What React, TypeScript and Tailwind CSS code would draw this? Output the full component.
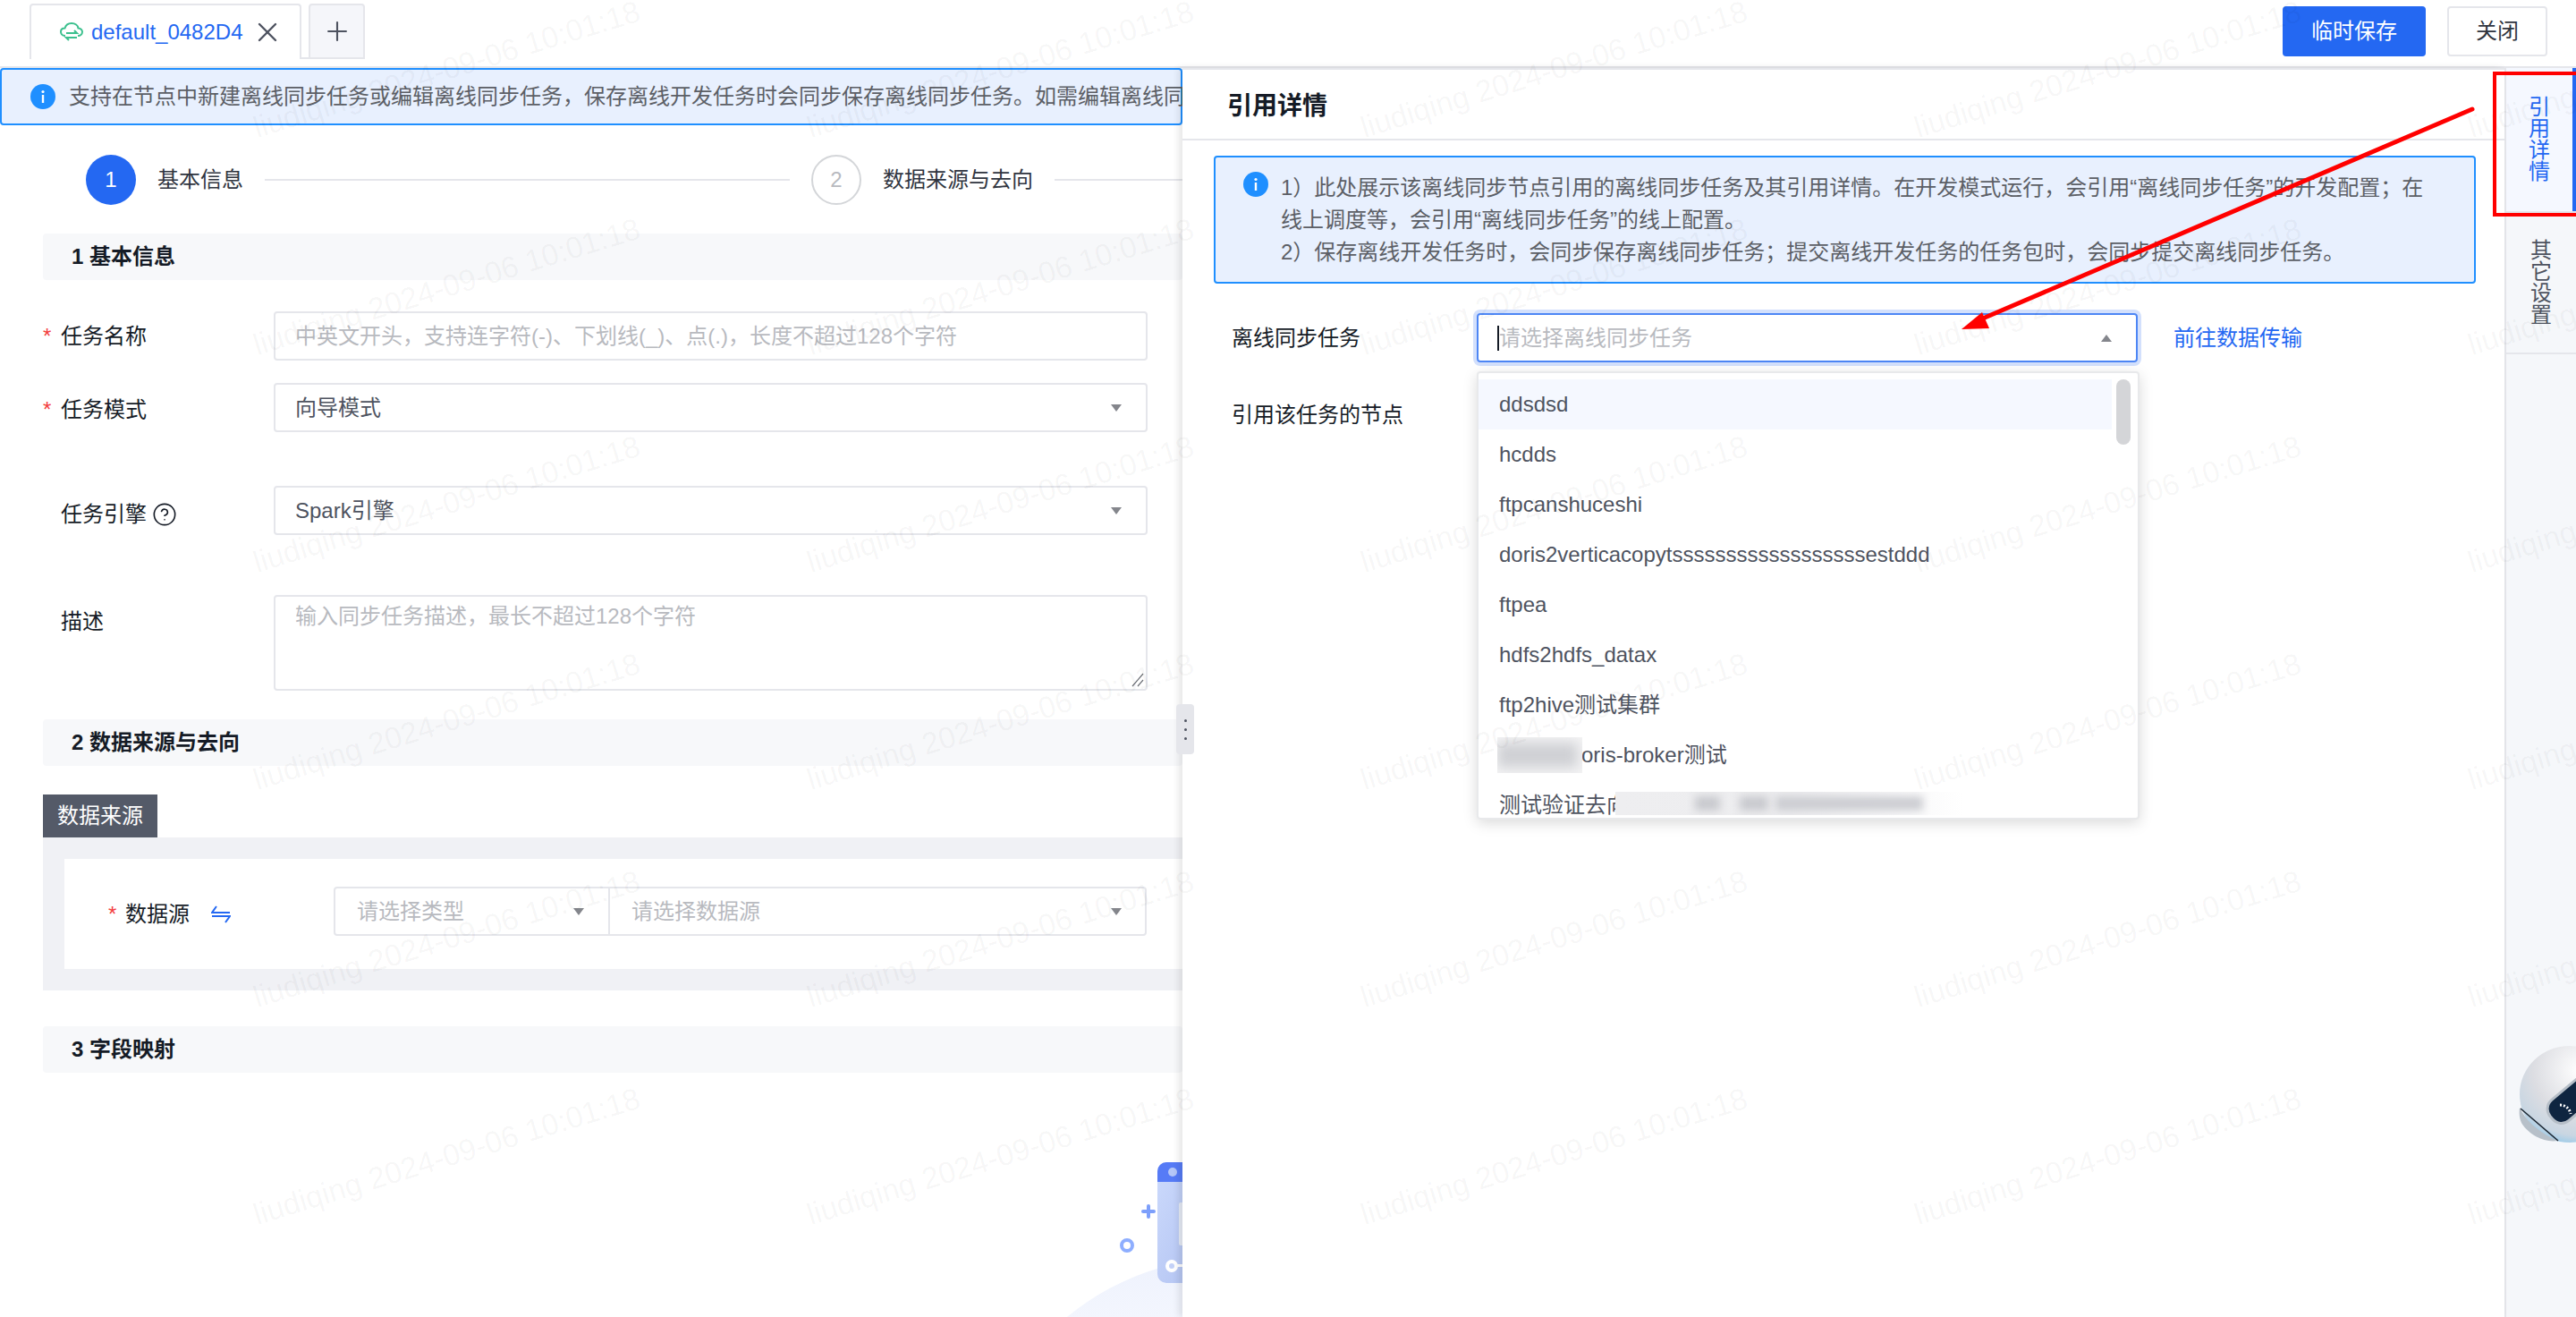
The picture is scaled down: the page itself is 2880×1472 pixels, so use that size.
import { CircleHelp, Plus, X } from 'lucide-react';

const options = ['ddsdsd', 'hcdds', 'ftpcanshuceshi', 'doris2verticacopytssssssssssssssssssestddd', 'ftpea', 'hdfs2hdfs_datax', 'ftp2hive测试集群'];

function ArrowDown() {
    return (
        <svg width="12" height="8" viewBox="0 0 12 8" className="shrink-0">
            <polygon points="0,0 12,0 6,8" fill="#84868c" />
        </svg>
    );
}

function InfoIcon() {
    return (
        <svg width="28" height="28" viewBox="0 0 28 28" className="shrink-0">
            <circle cx="14" cy="14" r="14" fill="#1f8fff" />
            <circle cx="14" cy="8.5" r="1.6" fill="#fff" />
            <rect x="12.8" y="12" width="2.4" height="9" fill="#fff" />
        </svg>
    );
}

function SectionTitle({ children }: { children: string }) {
    return (
        <div className="h-[52px] ml-12 pl-8 flex items-center bg-[#f7f8fa] rounded text-[#151b26] font-semibold whitespace-nowrap">
            {children}
        </div>
    );
}

function Step({ num, label, active }: { num: number; label: string; active?: boolean }) {
    return (
        <div className="flex items-center gap-6 shrink-0">
            <div className={active ? 'w-14 h-14 rounded-full bg-[#2468f2] text-white flex items-center justify-center' : 'w-14 h-14 rounded-full border-2 border-[#d4d6d9] text-[#b8babf] flex items-center justify-center'}>
                {num}
            </div>
            <span className="text-[#303540]">{label}</span>
        </div>
    );
}

function Label({ text, required, className }: { text: string; required?: boolean; className?: string }) {
    return (
        <div className={`w-[258px] ml-12 flex items-center shrink-0 text-[#151b26] ${className ?? ''}`}>
            <span className="w-5 text-[#f33e3e]">{required ? '*' : ''}</span>
            {text}
        </div>
    );
}

function Illustration() {
    return (
        <svg width="142" height="182" viewBox="0 0 142 182" className="absolute left-[1180px] top-[1214px]">
            <defs>
                <linearGradient id="hill" x1="0" y1="0" x2="0" y2="1">
                    <stop offset="0" stopColor="#eef2fd" />
                    <stop offset="0.3" stopColor="#fbfcff" />
                </linearGradient>
                <linearGradient id="body" x1="0" y1="0" x2="1" y2="1">
                    <stop offset="0" stopColor="#ccdafc" />
                    <stop offset="1" stopColor="#aebff0" />
                </linearGradient>
                <clipPath id="card">
                    <rect x="114" y="9" width="60" height="135" rx="10" />
                </clipPath>
            </defs>
            <circle cx="200" cy="410" r="295" fill="url(#hill)" />
            <g clipPath="url(#card)">
                <rect x="114" y="9" width="60" height="135" fill="url(#body)" />
                <rect x="114" y="9" width="60" height="22" fill="#567bf6" />
                <circle cx="131" cy="20" r="5" fill="#b5c7f7" />
                <rect x="138" y="54" width="10" height="48" rx="2" fill="#e6ebf6" />
                <circle cx="130" cy="125" r="5" fill="#c3d1f7" stroke="#fff" strokeWidth="4" />
                <rect x="135" y="123" width="10" height="3" fill="#fff" />
            </g>
            <rect x="96" y="62" width="16" height="4" rx="2" fill="#7d9ffb" />
            <rect x="102" y="56" width="4" height="16" rx="2" fill="#7d9ffb" />
            <circle cx="80" cy="102" r="6" fill="none" stroke="#8eaeff" strokeWidth="4" />
        </svg>
    );
}

function Robot() {
    return (
        <svg width="70" height="115" viewBox="0 0 70 115" className="absolute right-0 top-[1165px]">
            <defs>
                <radialGradient id="shell" cx="0.6" cy="0.25" r="0.85">
                    <stop offset="0" stopColor="#ffffff" />
                    <stop offset="0.55" stopColor="#dcdde2" />
                    <stop offset="0.8" stopColor="#c9d6e2" />
                    <stop offset="1" stopColor="#7cc4ee" />
                </radialGradient>
            </defs>
            <ellipse cx="63" cy="58" rx="56" ry="54" fill="url(#shell)" />
            <path d="M7 73 C14 88 30 102 50 110 C34 113 16 102 9 90 C7 85 6 80 7 73 Z" fill="#b7c0c9" />
            <path d="M8 74 L50 110" stroke="#1a2430" strokeWidth="1.5" fill="none" />
            <rect x="42" y="68" width="90" height="30" rx="13" fill="#0f2540" stroke="#b6bec7" strokeWidth="3" transform="rotate(-40 44 83)" />
            <path d="M52 70 C58 70 63 74 64 80" stroke="#fff" strokeWidth="3" strokeDasharray="2 2" fill="none" />
        </svg>
    );
}

export default function App() {
    return (
        <div className="relative w-[2880px] h-[1472px] overflow-hidden bg-white text-2xl leading-9 [font-family:'Liberation_Sans','Noto_Sans_CJK_SC',sans-serif]">

            {/* top bar */}
            <div className="h-[76px] flex items-start justify-between border-b-2 border-[#e5e6eb]">
                <div className="flex pl-[33px] pt-1">
                    <div className="w-[304px] h-[62px] border-2 border-b-0 border-[#e5e6eb] rounded-t flex items-center pl-8 gap-[9px]">
                        <svg width="26" height="23" viewBox="0 0 26 23" fill="none" stroke="#3cc08e" strokeWidth="2" className="shrink-0">
                            <path d="M6 15 C2 15 1 12 1 10.5 C1 8 3 6.5 5.5 6.5 C6.5 3 9.5 1 13 1 C17 1 20 3.5 20.5 6.5 C23 6.5 25 8.5 25 10.5 C25 13 23 15 20 15" />
                            <path d="M7 12 H19 L16 9" />
                            <path d="M19 17 H7 L10 20" />
                        </svg>
                        <span className="text-[#2468f2]">default_0482D4</span>
                        <X className="w-9 h-9 ml-px text-[#4e5360] shrink-0" strokeWidth={1.6} />
                    </div>
                    <div className="h-[62px] w-2 border-b-2 border-[#e5e6eb]" />
                    <div className="w-[63px] h-[62px] bg-[#f5f6fa] border-2 border-[#e5e6eb] rounded-t flex items-center justify-center">
                        <Plus className="w-[34px] h-[34px] text-[#4e5360]" strokeWidth={1.5} />
                    </div>
                </div>
                <div className="flex gap-6 pr-8 pt-[7px]">
                    <button className="w-40 h-14 bg-[#2468f2] text-white rounded">临时保存</button>
                    <button className="w-28 h-14 border-2 border-[#e5e6eb] text-[#303540] rounded">关闭</button>
                </div>
            </div>

            <div className="flex h-[1396px]">

                {/* left form */}
                <div className="relative w-[1322px] shrink-0 overflow-hidden">
                    <div className="h-16 flex items-center gap-[15px] pl-8 bg-[#e8f0fe] border-2 border-[#1f8fff] rounded text-[#5c5f66] whitespace-nowrap">
                        <InfoIcon />
                        <span>支持在节点中新建离线同步任务或编辑离线同步任务，保存离线开发任务时会同步保存离线同步任务。如需编辑离线同步任务</span>
                    </div>

                    <div className="flex items-center pl-24 mt-[33px] h-14">
                        <Step num={1} label="基本信息" active />
                        <div className="w-[587px] h-0.5 mx-6 bg-[#e5e6eb] shrink-0" />
                        <Step num={2} label="数据来源与去向" />
                        <div className="w-[200px] h-0.5 ml-6 bg-[#e5e6eb] shrink-0" />
                    </div>

                    <div className="mt-8">
                        <SectionTitle>1 基本信息</SectionTitle>
                    </div>

                    <div className="flex mt-[35px] h-[55px]">
                        <Label text="任务名称" required />
                        <div className="w-[977px] border-2 border-[#e5e6eb] rounded px-[22px] flex items-center text-[#b8babf]">
                            中英文开头，支持连字符(-)、下划线(_)、点(.)，长度不超过128个字符
                        </div>
                    </div>
                    <div className="flex mt-[25px] h-[55px]">
                        <Label text="任务模式" required className="pt-1" />
                        <div className="w-[977px] border-2 border-[#e5e6eb] rounded pl-[22px] pr-[27px] flex items-center justify-between text-[#4e5360]">
                            向导模式
                            <ArrowDown />
                        </div>
                    </div>
                    <div className="flex mt-[60px] h-[55px]">
                        <div className="w-[258px] ml-12 pl-5 pt-2 flex items-center shrink-0 text-[#151b26]">
                            任务引擎
                            <CircleHelp className="w-7 h-7 ml-1.5" strokeWidth={1.4} />
                        </div>
                        <div className="w-[977px] border-2 border-[#e5e6eb] rounded pl-[22px] pr-[27px] flex items-center justify-between text-[#4e5360]">
                            Spark引擎
                            <ArrowDown />
                        </div>
                    </div>
                    <div className="flex mt-[67px] h-[107px]">
                        <div className="w-[258px] ml-12 pl-5 pt-3 shrink-0 text-[#151b26]">描述</div>
                        <div className="relative w-[977px] border-2 border-[#e5e6eb] rounded px-[22px] pt-1 text-[#b8babf]">
                            输入同步任务描述，最长不超过128个字符
                            <svg width="14" height="16" viewBox="0 0 14 16" className="absolute right-0.5 bottom-0.5" stroke="#6b6e75" strokeWidth="1.2">
                                <path d="M1 15 L13 1 M7 15 L13 8" />
                            </svg>
                        </div>
                    </div>

                    <div className="mt-8">
                        <SectionTitle>2 数据来源与去向</SectionTitle>
                    </div>

                    <div className="mt-8 ml-12 w-32 h-12 bg-[#545a68] text-white flex items-center justify-center">数据来源</div>
                    <div className="ml-12 h-[171px] bg-[#f0f1f5] py-6 pl-6">
                        <div className="h-[123px] bg-white flex items-center">
                            <div className="w-[301px] pl-[49px] flex items-center shrink-0 text-[#151b26]">
                                <span className="w-[19px] text-[#f33e3e]">*</span>
                                数据源
                                <svg width="22" height="20" viewBox="0 0 22 20" fill="none" stroke="#2468f2" strokeWidth="2" className="ml-6">
                                    <path d="M6 1 L1 8 H21" />
                                    <path d="M1 12 H21 L16 19" />
                                </svg>
                            </div>
                            <div className="w-[909px] h-[55px] -mt-1.5 border-2 border-[#e5e6eb] rounded flex text-[#b8babf]">
                                <div className="w-[307px] pl-6 pr-[27px] flex items-center justify-between border-r-2 border-[#e5e6eb]">
                                    请选择类型
                                    <ArrowDown />
                                </div>
                                <div className="flex-1 pl-6 pr-[26px] flex items-center justify-between">
                                    请选择数据源
                                    <ArrowDown />
                                </div>
                            </div>
                        </div>
                    </div>

                    <div className="mt-10">
                        <SectionTitle>3 字段映射</SectionTitle>
                    </div>

                    <Illustration />
                </div>

                {/* reference drawer */}
                <div className="relative flex-1 flex flex-col border-t-2 border-[#e5e6eb] shadow-[-4px_0_8px_rgba(0,0,0,0.1)]">
                    <div className="h-[79px] pl-[50px] pt-1 flex items-center border-b-2 border-[#e5e6eb] text-[28px] font-semibold text-[#151b26]">引用详情</div>

                    <div className="ml-[35px] mt-[17px] w-[1411px] h-[143px] flex gap-3.5 pl-[31px] pr-10 pt-4 bg-[#e8f0fe] border-2 border-[#1f8fff] rounded text-[#5c5f66]">
                        <InfoIcon />
                        <div>
                            1）此处展示该离线同步节点引用的离线同步任务及其引用详情。在开发模式运行，会引用“离线同步任务”的开发配置；在线上调度等，会引用“离线同步任务”的线上配置。
                            <br />
                            2）保存离线开发任务时，会同步保存离线同步任务；提交离线开发任务的任务包时，会同步提交离线同步任务。
                        </div>
                    </div>

                    <div className="flex items-center mt-[33px] ml-[55px]">
                        <div className="w-[274px] shrink-0 text-[#151b26]">离线同步任务</div>
                        <div className="relative w-[739px] h-[55px] border-2 border-[#4d86f5] rounded shadow-[0_0_0_4px_#d3e0fc] pl-[23px] pr-[27px] flex items-center justify-between text-[#b8babf]">
                            <div className="flex items-center">
                                <span className="w-0.5 h-7 -ml-0.5 bg-[#151b26]" />
                                请选择离线同步任务
                            </div>
                            <svg width="12" height="8" viewBox="0 0 12 8" className="shrink-0">
                                <polygon points="0,8 12,8 6,0" fill="#84868c" />
                            </svg>

                            {/* open dropdown */}
                            <div className="absolute -left-0.5 top-[63px] z-20 w-[741px] h-[501px] bg-white border-2 border-[#e8e9eb] rounded pt-[7px] overflow-hidden shadow-[0_4px_16px_rgba(0,0,0,0.15)] text-[#4e5360]">
                                <div className="absolute left-[713px] top-[7px] w-4 h-[73px] rounded-full bg-[#d4d5d8]" />
                                {options.map((o, i) => (
                                    <div key={o} className={i === 0 ? 'w-[708px] h-14 pl-[23px] flex items-center bg-[#f5f8ff]' : 'w-[708px] h-14 pl-[23px] flex items-center'}>
                                        {o}
                                    </div>
                                ))}
                                <div className="relative h-14 pl-[115px] flex items-center">
                                    oris-broker测试
                                    <div className="absolute left-[21px] top-[8px] w-[95px] h-10 bg-[#f4f4f5] overflow-hidden">
                                        <div className="w-[90px] h-7 mt-1.5 bg-[#cfd0d4] blur-[7px]" />
                                    </div>
                                </div>
                                <div className="relative h-14 pl-[23px] flex items-center whitespace-nowrap">
                                    测试验证去向
                                    <div className="absolute left-[153px] top-[13px] w-[389px] h-[26px] overflow-hidden bg-linear-to-r from-[#eeeef0] via-[#ededef] to-white flex items-center">
                                        <div className="w-7 h-4 ml-[89px] bg-[#c8c9ce] blur-[5px]" />
                                        <div className="w-8 h-4 ml-[22px] bg-[#c8c9ce] blur-[5px]" />
                                        <div className="w-[165px] h-4 ml-2 bg-[#cccdd2] blur-[5px]" />
                                    </div>
                                </div>
                            </div>
                        </div>
                        <span className="ml-[40px] text-[#2468f2]">前往数据传输</span>
                    </div>

                    <div className="mt-[41px] ml-[55px] text-[#151b26]">引用该任务的节点</div>

                    <div className="absolute -left-[7px] top-[709px] z-10 w-5 h-14 bg-[#e5e6eb] rounded flex flex-col items-center justify-center gap-[7px]">
                        <span className="w-[3px] h-[3px] rounded-full bg-[#4e5360]" />
                        <span className="w-[3px] h-[3px] rounded-full bg-[#4e5360]" />
                        <span className="w-[3px] h-[3px] rounded-full bg-[#4e5360]" />
                    </div>
                </div>

                {/* side tabs */}
                <div className="w-20 shrink-0 bg-[#f5f7fa] border-l-2 border-[#e5e6eb]">
                    <div className="h-[160px] bg-[#f5f8ff] border-r-4 border-[#2468f2] flex items-center justify-center">
                        <div className="w-6 leading-6 text-[#2468f2]">引用详情</div>
                    </div>
                    <div className="h-[160px] border-t-2 border-b-2 border-[#e5e6eb] flex items-center justify-center">
                        <div className="w-6 leading-6 text-[#4e5360]">其它设置</div>
                    </div>
                </div>
            </div>

            <Robot />

            {/* watermark */}
            <div className="absolute inset-0 z-30 overflow-hidden pointer-events-none">
                <div className="grid grid-cols-[repeat(5,619px)] auto-rows-[243px] pl-[289px] -mt-[84px]">
                    {Array.from({ length: 30 }, (_, i) => (
                        <div key={i} className="flex items-end">
                            <span className="origin-bottom-left -rotate-[17deg] whitespace-nowrap text-[34px] leading-none text-black/[0.045]">
                                liudiqing 2024-09-06 10:01:18
                            </span>
                        </div>
                    ))}
                </div>
            </div>

            {/* red annotation */}
            <svg width="2880" height="1472" viewBox="0 0 2880 1472" className="absolute inset-0 z-40 pointer-events-none">
                <rect x="2789" y="82" width="100" height="158" fill="none" stroke="#ff0000" strokeWidth="4" />
                <path d="M2764 122 L2212 358" stroke="#ff0000" strokeWidth="5" strokeLinecap="round" />
                <polygon points="2193,368 2216,349 2224,367" fill="#ff0000" />
            </svg>
        </div>
    );
}
